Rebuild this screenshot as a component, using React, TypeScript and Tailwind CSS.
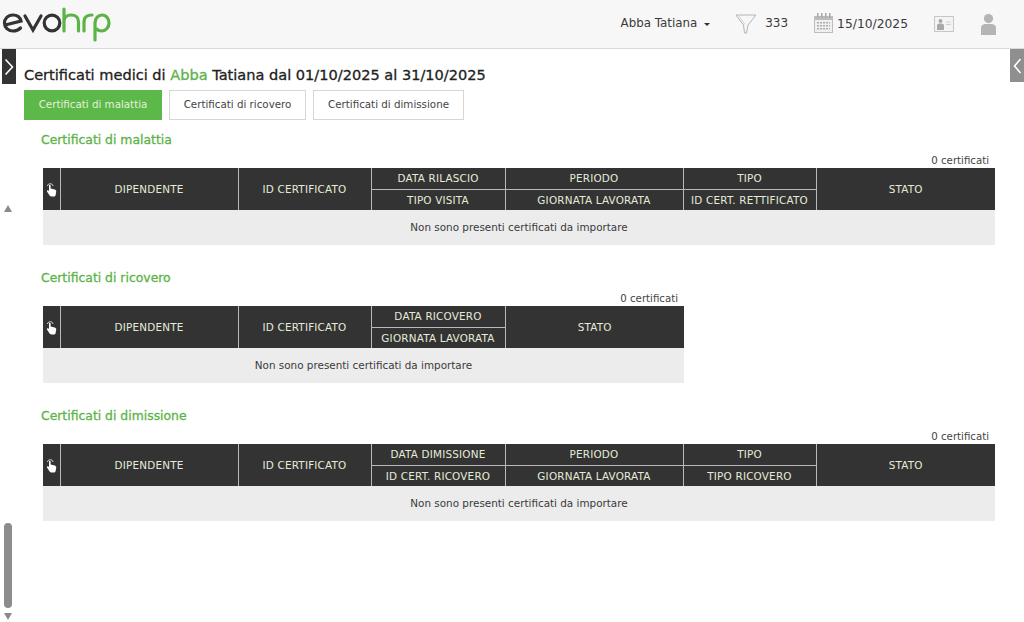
import React from "react";

const font = { fontFamily: '"DejaVu Sans", Verdana, sans-serif' };

function Logo() {
  return (
    <svg width="112" height="38" viewBox="0 0 112 38" fill="none" strokeWidth="3.2" strokeLinecap="round">
      <g stroke="#333333">
        <path d="M4 18 L20 14 C19 10 16 8 12 8 C6.5 8 3.5 12 3.5 16 C3.5 20.5 7 24 12 24 C15 24 17.5 23 19.5 21" />
        <path d="M24 9 L32 23 L40 9" />
        <circle cx="51" cy="16" r="7.8" />
      </g>
      <g stroke="#5cb348">
        <path d="M63 2 V24 M63 15 C63 10 66 8 70 8 C75 8 77.5 11 77.5 15 V24" />
        <path d="M83 24 V15 C83 10 86 8 91 8" />
        <path d="M94 33 V16 C94 11 97.5 8 101 8 C105.5 8 108 12 108 16 C108 20 105 24 100.5 24 C98.5 24 97 23.5 95.5 22" />
      </g>
    </svg>
  );
}

function FunnelIcon() {
  return (
    <svg width="22" height="20" viewBox="0 0 22 20" fill="none" stroke="#b4b4b4" strokeWidth="1">
      <path d="M1 1 H21 L13 11 L11.5 19 L9.5 19 L8.5 11 Z" />
      <path d="M4 2 L10 10.5" stroke="#d4d4d4" />
    </svg>
  );
}

function CalendarIcon() {
  return (
    <svg width="19" height="20" viewBox="0 0 19 20">
      <path d="M0 3 H19 V20 H0 Z" fill="#bdbdbd" />
      <path d="M1 7 H18 V19 H1 Z" fill="#efefef" />
      <path d="M3 0 h1.5 v5 h-1.5 Z M7 0 h1.5 v5 h-1.5 Z M11 0 h1.5 v5 h-1.5 Z M15 0 h1.5 v5 h-1.5 Z" fill="#a8a8a8" />
      <path d="M3 9 h13 v1.6 h-13 Z M3 12 h13 v1.6 h-13 Z M3 15 h13 v1.6 h-13 Z" fill="#adadad" />
      <path d="M5.5 8 v10 M8.5 8 v10 M11.5 8 v10 M14.5 8 v10" stroke="#efefef" strokeWidth="1" />
    </svg>
  );
}

function BadgeIcon() {
  return (
    <svg width="20" height="16" viewBox="0 0 20 16">
      <rect x="0.5" y="0.5" width="19" height="15" fill="#f4f4f4" stroke="#c6c6c6" />
      <circle cx="6.5" cy="5" r="2" fill="#a8a8a8" />
      <path d="M3 14 V9.5 C3 8 4.5 7.5 6.5 7.5 C8.5 7.5 10 8 10 9.5 V14 Z" fill="#a8a8a8" />
      <path d="M12 6 H17 M12 8.5 H17" stroke="#d0d0d0" />
    </svg>
  );
}

function PersonIcon() {
  return (
    <svg width="15" height="21" viewBox="0 0 15 21" fill="#b5b5b5">
      <circle cx="7.5" cy="4.6" r="4.6" />
      <path d="M0 21 V14 C0 11 2.5 10 5 10 H10 C12.5 10 15 11 15 14 V21 Z" />
    </svg>
  );
}

function HandIcon() {
  return (
    <svg width="11" height="15" viewBox="0 0 11 15">
      <path d="M1.5 4 C1.5 1 7 1 7 4" fill="none" stroke="#d8d8d8" strokeWidth="1" />
      <path d="M3 3.6 C3 2.6 4.6 2.6 4.6 3.6 V6.6 L8.8 7.6 C10 8 10.4 8.8 10.2 10 L9.6 13 C9.4 14 8.8 14.5 7.8 14.5 H5.4 C4.6 14.5 4 14.2 3.6 13.5 L1 9.6 C0.5 8.6 1.6 7.8 2.4 8.4 L3 9 Z" fill="#ffffff" />
    </svg>
  );
}

type Head = { label: string; sub?: string; width: number };

function HeadRows({ cols }: { cols: Head[] }) {
  const cell = "border-l border-[#b9b9b9] text-center font-normal align-middle px-0 pb-0 pt-[2px]";
  return (
    <thead className="bg-[#333333] text-[#e6ebd9] text-[10.4px] tracking-[0.2px]">
      <tr className="h-[21px]">
        <th rowSpan={2} className="w-[17px] p-0 align-middle">
          <span className="flex justify-center pt-px">
            <HandIcon />
          </span>
        </th>
        {cols.map((c) =>
          c.sub ? (
            <th key={c.label} className={`${cell} border-b`} style={{ width: c.width }}>
              {c.label}
            </th>
          ) : (
            <th key={c.label} rowSpan={2} className={cell} style={{ width: c.width }}>
              {c.label}
            </th>
          )
        )}
      </tr>
      <tr className="h-[21px]">
        {cols
          .filter((c) => c.sub)
          .map((c) => (
            <th key={c.sub} className={cell}>
              {c.sub}
            </th>
          ))}
      </tr>
    </thead>
  );
}

function Section({ title, cols, width }: { title: string; cols: Head[]; width: number }) {
  return (
    <section className="pl-[17px] h-[138px]">
      <h3 className="text-[#5cb348] text-[12.4px] leading-[16px] h-[16px] [-webkit-text-stroke:0.3px]">{title}</h3>
      <div className="ml-[2px]" style={{ width }}>
        <div className="h-[16px] mt-[4px] pr-[6px] text-right text-[10.2px] leading-[18px] text-[#444444]">
          0 certificati
        </div>
        <table className="border-collapse table-fixed w-full">
          <HeadRows cols={cols} />
          <tbody>
            <tr>
              <td
                colSpan={cols.length + 1}
                className="h-[35px] bg-[#ececec] text-center text-[10.4px] text-[#3a3a3a] px-0 pb-0 pt-px"
              >
                Non sono presenti certificati da importare
              </td>
            </tr>
          </tbody>
        </table>
      </div>
    </section>
  );
}

const malattia: Head[] = [
  { label: "DIPENDENTE", width: 178 },
  { label: "ID CERTIFICATO", width: 133 },
  { label: "DATA RILASCIO", sub: "TIPO VISITA", width: 134 },
  { label: "PERIODO", sub: "GIORNATA LAVORATA", width: 178 },
  { label: "TIPO", sub: "ID CERT. RETTIFICATO", width: 133 },
  { label: "STATO", width: 179 },
];

const ricovero: Head[] = [
  { label: "DIPENDENTE", width: 178 },
  { label: "ID CERTIFICATO", width: 133 },
  { label: "DATA RICOVERO", sub: "GIORNATA LAVORATA", width: 134 },
  { label: "STATO", width: 179 },
];

const dimissione: Head[] = [
  { label: "DIPENDENTE", width: 178 },
  { label: "ID CERTIFICATO", width: 133 },
  { label: "DATA DIMISSIONE", sub: "ID CERT. RICOVERO", width: 134 },
  { label: "PERIODO", sub: "GIORNATA LAVORATA", width: 178 },
  { label: "TIPO", sub: "TIPO RICOVERO", width: 133 },
  { label: "STATO", width: 179 },
];

export default function App() {
  return (
    <div className="relative h-[622px] w-[1024px] overflow-hidden bg-white" style={font}>
      <header className="h-[49px] bg-[#f7f7f7] border-b border-[#d9d9d9] flex items-center">
        <div className="pl-[1px] pt-[3px]">
          <Logo />
        </div>
        <div className="ml-auto flex items-center text-[#3a3a3a] text-[12px]">
          <span className="text-[11.85px]">Abba Tatiana</span>
          <span className="ml-[7px] mt-px border-x-[3px] border-t-[3px] border-x-transparent border-t-[#333333]" />
          <span className="ml-[25px]">
            <FunnelIcon />
          </span>
          <span className="ml-[8px] -mt-[3px]">333</span>
          <span className="ml-[26px] -mt-[2px]">
            <CalendarIcon />
          </span>
          <span className="ml-[4px] text-[12.3px]">15/10/2025</span>
          <span className="ml-[26px]">
            <BadgeIcon />
          </span>
          <span className="ml-[27px] mr-[28px]">
            <PersonIcon />
          </span>
        </div>
      </header>

      <div className="flex">
        <aside className="w-[24px] h-[573px] shrink-0 flex flex-col">
          <div className="ml-[2px] w-[14px] h-[35px] bg-[#333333] flex items-center justify-center">
            <svg width="10" height="18" viewBox="0 0 10 18" fill="none" stroke="#ffffff" strokeWidth="1.6">
              <path d="M1.5 1.5 L8.5 9 L1.5 16.5" />
            </svg>
          </div>
          <div className="mt-[121px] ml-[4px] w-0 h-0 border-x-[4.5px] border-b-[7px] border-x-transparent border-b-[#8a8a8a]" />
          <div className="mt-[311px] ml-[4px] w-[8px] h-[85px] rounded-full bg-[#8c8c8c]" />
          <div className="mt-[5px] ml-[4px] w-0 h-0 border-x-[4.5px] border-t-[7px] border-x-transparent border-t-[#8a8a8a]" />
        </aside>

        <main className="flex-1 text-[#222222]">
          <h1 className="mt-[17px] text-[14.56px] leading-[18px] text-[#222222] [-webkit-text-stroke:0.3px]">
            Certificati medici di <span className="text-[#5cb348]">Abba</span> Tatiana dal 01/10/2025 al 31/10/2025
          </h1>
          <div className="mt-[6px] flex gap-[7px] text-[10.3px]">
            <button className="h-[30px] w-[138px] bg-[#5cb848] text-[#e6f0dc]">Certificati di malattia</button>
            <button className="h-[30px] w-[137px] bg-white border border-[#d6d6d6] text-[#444444]">
              Certificati di ricovero
            </button>
            <button className="h-[30px] w-[151px] bg-white border border-[#d6d6d6] text-[#444444]">
              Certificati di dimissione
            </button>
          </div>
          <div className="mt-[12px]">
            <Section title="Certificati di malattia" cols={malattia} width={952} />
            <Section title="Certificati di ricovero" cols={ricovero} width={641} />
            <Section title="Certificati di dimissione" cols={dimissione} width={952} />
          </div>
        </main>
      </div>

      <div className="absolute right-0 top-[49px] w-[14px] h-[33px] bg-[#8f8f8f] flex items-center justify-center">
        <svg width="9" height="16" viewBox="0 0 9 16" fill="none" stroke="#ffffff" strokeWidth="1.6">
          <path d="M7.5 1 L1.5 8 L7.5 15" />
        </svg>
      </div>
    </div>
  );
}
